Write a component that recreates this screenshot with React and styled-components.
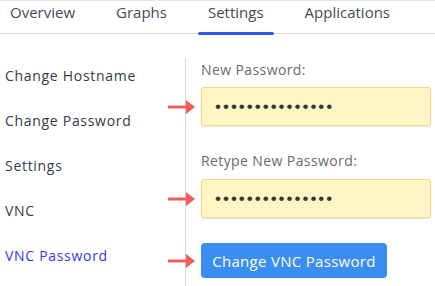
import React from "react";
import styled, { createGlobalStyle } from "styled-components";

const Global = createGlobalStyle`
  html, body { margin: 0; padding: 0; background: #fff; }
  body { font-family: "Open Sans", "Liberation Sans", sans-serif; overflow: hidden; }
  * { box-sizing: border-box; }
`;

const Page = styled.div`
  width: 435px;
  height: 286px;
  border-top: 1px solid #e4e4e4;
  overflow: hidden;
`;

const Tabs = styled.div`
  display: flex;
  gap: 21px;
  height: 33px;
  border-bottom: 1px solid #dcdcdc;
`;

const Tab = styled.div`
  position: relative;
  padding: 0 10px;
  font-size: 15px;
  font-weight: 500;
  color: #444b55;
  line-height: 22px;
  white-space: nowrap;
  ${(p) =>
    p.$active &&
    `
    &::after {
      content: "";
      position: absolute;
      left: 0;
      right: 0;
      bottom: -2px;
      height: 3px;
      border-radius: 2px;
      background: #3158e8;
    }
  `}
`;

const Main = styled.div`
  display: flex;
  margin-top: 24px;
`;

const Nav = styled.div`
  width: 186px;
  flex-shrink: 0;
  border-right: 1px solid #d6d6d6;
  display: flex;
  flex-direction: column;
  height: 240px;
`;

const NavItem = styled.div`
  height: 45px;
  padding: 8px 0 0 5px;
  line-height: 20px;
  font-size: 14px;
  font-weight: 500;
  letter-spacing: 0.7px;
  color: ${(p) => (p.$active ? "#3636f0" : "#363b43")};
`;

const Form = styled.div`
  display: flex;
  flex-direction: column;
  padding: 2px 0 0 15px;
  width: 245px;
`;

const Label = styled.div`
  font-size: 14px;
  font-weight: 500;
  line-height: 20px;
  letter-spacing: 0.4px;
  color: #6b6b6b;
  margin-bottom: ${(p) => p.$mb || 7}px;
`;

const Row = styled.div`
  position: relative;
  margin-bottom: 25px;
`;

const Input = styled.input`
  display: block;
  width: 230px;
  height: 39px;
  background: #fff6c4;
  border: 1px solid #efd58e;
  border-radius: 3px;
  box-shadow: 0 1px 2px rgba(0, 0, 0, 0.12);
  padding: 0 0 0 13px;
  font-family: "Liberation Sans", sans-serif;
  font-size: 17px;
  letter-spacing: 2px;
  color: #2f3a36;
  outline: none;
`;

const Button = styled.button`
  display: block;
  width: 186px;
  height: 35px;
  background: #3a8ef1;
  border: none;
  border-radius: 4px;
  color: #fff;
  font-family: "Open Sans", "Liberation Sans", sans-serif;
  font-size: 15px;
  font-weight: 500;
  letter-spacing: 0.3px;
  padding: 0;
`;

const ArrowWrap = styled.svg`
  position: absolute;
  left: -34px;
  top: 50%;
  margin-top: -8px;
  width: 30px;
  height: 16px;
`;

const Arrow = () => (
  <ArrowWrap viewBox="0 0 30 16">
    <rect x="1" y="6.5" width="22" height="3" fill="#f45b5b" />
    <path d="M19 1 L28 8 L19 15 Z" fill="#f45b5b" />
  </ArrowWrap>
);

export default function App() {
  return (
    <Page>
      <Global />
      <Tabs>
        <Tab>Overview</Tab>
        <Tab>Graphs</Tab>
        <Tab $active>Settings</Tab>
        <Tab>Applications</Tab>
      </Tabs>
      <Main>
        <Nav>
          <NavItem>Change Hostname</NavItem>
          <NavItem>Change Password</NavItem>
          <NavItem>Settings</NavItem>
          <NavItem>VNC</NavItem>
          <NavItem $active>VNC Password</NavItem>
        </Nav>
        <Form>
          <Label>New Password:</Label>
          <Row>
            <Arrow />
            <Input type="password" readOnly value="123456789012345" />
          </Row>
          <Label $mb={8}>Retype New Password:</Label>
          <Row>
            <Arrow />
            <Input type="password" readOnly value="123456789012345" />
          </Row>
          <Row>
            <Arrow />
            <Button>Change VNC Password</Button>
          </Row>
        </Form>
      </Main>
    </Page>
  );
}
